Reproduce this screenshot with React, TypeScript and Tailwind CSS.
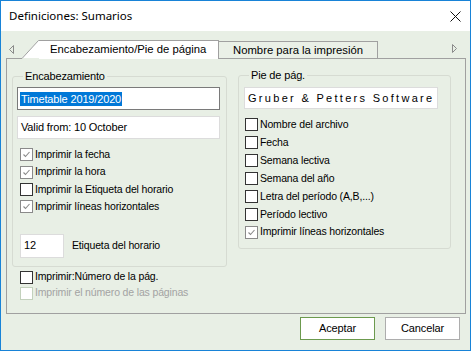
import React from 'react';

const leftChecks = [
  { label: 'Imprimir la fecha', checked: true },
  { label: 'Imprimir la hora', checked: true },
  { label: 'Imprimir la Etiqueta del horario', checked: false },
  { label: 'Imprimir líneas horizontales', checked: true },
];

const rightChecks = [
  { label: 'Nombre del archivo', checked: false },
  { label: 'Fecha', checked: false },
  { label: 'Semana lectiva', checked: false },
  { label: 'Semana del año', checked: false },
  { label: 'Letra del período (A,B,...)', checked: false },
  { label: 'Período lectivo', checked: false },
  { label: 'Imprimir líneas horizontales', checked: true },
];

function Check({
  label,
  checked,
  disabled,
  rowClass,
}: {
  label: string;
  checked?: boolean;
  disabled?: boolean;
  rowClass: string;
}) {
  const box = disabled
    ? 'border-[#c3d1bc]'
    : checked
      ? 'border-[#8a8a8a]'
      : 'border-[#333333]';
  return (
    <div className={`flex items-center ${rowClass}`}>
      <span className={`w-[13px] h-[13px] border bg-white flex items-center justify-center shrink-0 ${box}`}>
        {checked && (
          <svg width="9" height="9" viewBox="0 0 9 9">
            <path d="M1.5 4.5 L3.5 6.5 L7.5 2" stroke="#8a8a8a" strokeWidth="1.1" fill="none" />
          </svg>
        )}
      </span>
      <span className={`ml-[2px] whitespace-nowrap ${disabled ? 'text-[#a3a3a3]' : 'text-black'}`}>{label}</span>
    </div>
  );
}

export default function App() {
  return (
    <div className="w-[471px] h-[351px] border border-[#1883d7] flex flex-col bg-[#e8efe5] font-['Liberation_Sans',Arial,sans-serif] text-[10.5px] tracking-[-0.15px] text-black overflow-hidden">
      {/* Title bar */}
      <div className="h-[30px] shrink-0 bg-white flex items-center justify-between pl-[8px] pr-[9px]">
        <span className="font-['Noto_Sans',sans-serif] text-[11.5px] tracking-normal">Definiciones: Sumarios</span>
        <svg width="11" height="11" viewBox="0 0 11 11">
          <path d="M0.5 0.5 L10.5 10.5 M10.5 0.5 L0.5 10.5" stroke="#111" strokeWidth="1" />
        </svg>
      </div>

      <div className="flex-1 flex flex-col pl-[5px] pr-[4px] pt-[9px]">
        {/* Tab strip */}
        <div className="h-[19px] flex items-stretch">
          <div className="w-[16px] border-b border-[#a0a0a0] pl-[3px] pt-[5px]">
            <svg width="5" height="9" viewBox="0 0 5 9">
              <path d="M4.5 0.5 L0.5 4.5 L4.5 8.5 Z" stroke="#8a8a8a" fill="none" strokeWidth="1" />
            </svg>
          </div>
          <div className="flex items-stretch">
            <svg width="17" height="19" viewBox="0 0 17 19" className="shrink-0">
              <path d="M0 18 L16.5 0.5 L17 0.5 L17 18 Z" fill="#fff" />
              <path d="M0 18.5 L16.5 0.5 L17 0.5" stroke="#a0a0a0" fill="none" strokeWidth="1" />
            </svg>
            <div className="w-[180px] bg-white border-t border-r border-[#a0a0a0] pl-[11px] whitespace-nowrap text-[11.3px] tracking-normal leading-[17px]">
              Encabezamiento/Pie de página
            </div>
          </div>
          <div className="mt-[1px] w-[159px] border-t border-r border-b border-[#a0a0a0] bg-[#eaf0e7] pl-[14px] whitespace-nowrap text-[11.3px] tracking-normal leading-[16px]">
            Nombre para la impresión
          </div>
          <div className="flex-1 border-b border-[#a0a0a0] flex justify-end pr-[9px] pt-[4px]">
            <svg width="5" height="9" viewBox="0 0 5 9">
              <path d="M0.5 0.5 L4.5 4.5 L0.5 8.5 Z" stroke="#8a8a8a" fill="none" strokeWidth="1" />
            </svg>
          </div>
        </div>

        {/* Panel */}
        <div className="h-[255px] border-l border-r border-b border-[#a0a0a0] flex pl-[5px] pt-[11px]">
          {/* Left column */}
          <div className="w-[215px] flex flex-col">
            <fieldset className="border border-[#d6dbd2] rounded-[3px] pl-[4px] pb-[8px]">
              <legend className="ml-[6px] px-[2px] leading-[13px] text-[11px]">Encabezamiento</legend>
              <div className="mt-[4px] w-[203px] h-[23px] border border-[#7a7a7a] bg-white flex items-center pl-[2px] text-[11px]">
                <span className="bg-[#0078d7] text-white leading-[14px] px-[1px]">Timetable 2019/2020</span>
              </div>
              <div className="mt-[6px] w-[203px] h-[23px] border border-[#dcdcdc] bg-white flex items-center pl-[3px] text-[11px]">
                Valid from: 10 October
              </div>
              <div className="mt-[7px] ml-[3px] flex flex-col">
                {leftChecks.map((c, i) => (
                  <Check key={i} label={c.label} checked={c.checked} rowClass="h-[17.4px]" />
                ))}
              </div>
              <div className="mt-[18px] ml-[3px] flex items-center">
                <div className="w-[44px] h-[24px] border border-[#dcdcdc] bg-white flex items-center pl-[3px] text-[11px]">12</div>
                <span className="ml-[8px]">Etiqueta del horario</span>
              </div>
            </fieldset>
            <div className="mt-[2px] ml-[8px] flex flex-col">
              <Check label="Imprimir:Número de la pág." rowClass="h-[17px]" />
              <Check label="Imprimir el número de las páginas" disabled rowClass="h-[15px]" />
            </div>
          </div>

          {/* Right column */}
          <div className="ml-[11px] w-[213px] -mt-[1px]">
            <fieldset className="border border-[#d6dbd2] rounded-[3px] pl-[5px] pb-[7px]">
              <legend className="ml-[5px] px-[2px] leading-[13px] text-[11px]">Pie de pág.</legend>
              <div className="mt-[5px] w-[194px] h-[22px] border border-[#dcdcdc] bg-white flex items-center pl-[3px] text-[11px] tracking-[2.3px] whitespace-nowrap">
                Gruber &amp; Petters Software
              </div>
              <div className="mt-[7px] ml-[1px] flex flex-col">
                {rightChecks.map((c, i) => (
                  <Check key={i} label={c.label} checked={c.checked} rowClass="h-[17.9px]" />
                ))}
              </div>
            </fieldset>
          </div>
        </div>

        {/* Buttons */}
        <div className="mt-[3px] flex justify-end gap-[10px] pr-[6px]">
          <button className="w-[75px] h-[23px] border border-[#6c9a4e] bg-white text-black text-[11px]">Aceptar</button>
          <button className="w-[75px] h-[23px] border border-[#adadad] bg-white text-black text-[11px]">Cancelar</button>
        </div>
      </div>
    </div>
  );
}
